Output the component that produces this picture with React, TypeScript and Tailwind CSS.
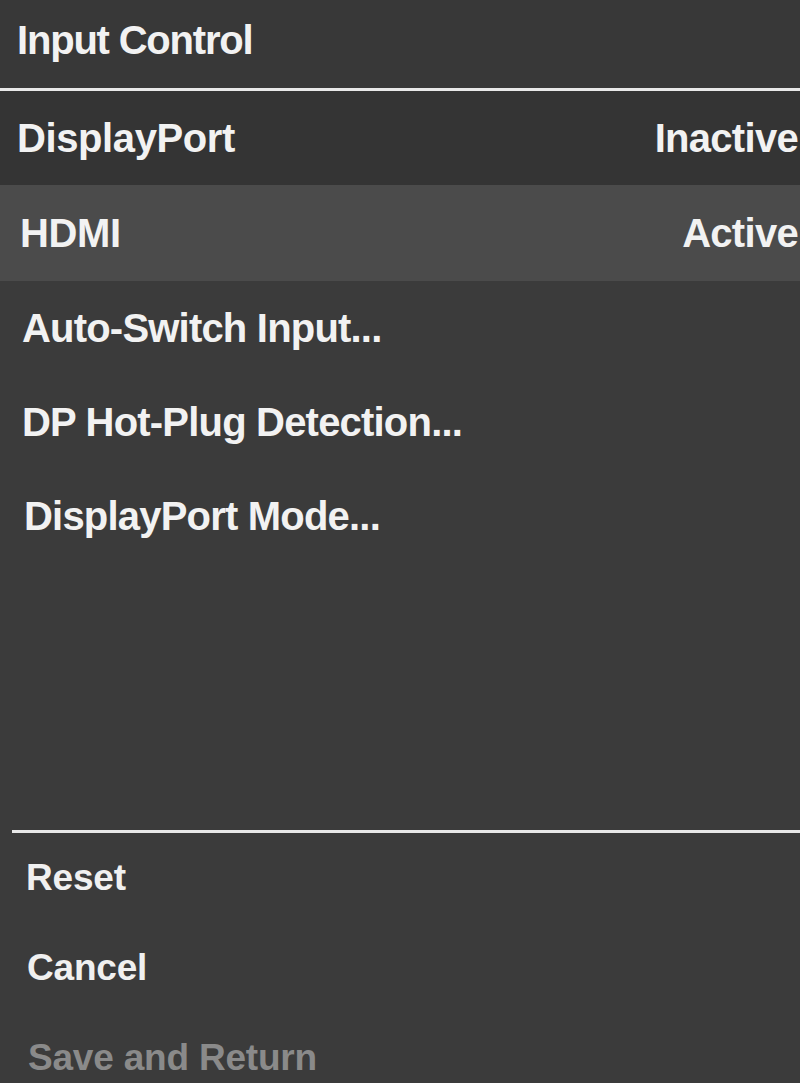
const font = "font-['Liberation_Sans',Arial,sans-serif]"

const inputs = [
  { label: "DisplayPort", status: "Inactive", row: "h-[94px] bg-[#343434] pl-[17px]" },
  { label: "HDMI", status: "Active", row: "h-[96px] bg-[#4b4b4b] pl-[20px]" },
]

const options = [
  { label: "Auto-Switch Input...", row: "pl-[22px]" },
  { label: "DP Hot-Plug Detection...", row: "pl-[22px]" },
  { label: "DisplayPort Mode...", row: "pl-[24px]" },
]

const actions = [
  { label: "Reset", row: "pl-[26px] text-[#f0f0f0]" },
  { label: "Cancel", row: "pl-[27px] text-[#f0f0f0]" },
  { label: "Save and Return", row: "pl-[28px] text-[#8a8a8a]" },
]

export default function App() {
  return (
    <main className={`w-[800px] h-[1083px] overflow-hidden bg-[#3b3b3b] text-[#f2f2f2] ${font}`}>
      <header className="h-[88px] flex items-center pl-[17px] pb-[8px] bg-[#383838]">
        <h1 className="text-[40px] leading-none font-bold tracking-[-1.2px]">Input Control</h1>
      </header>
      <div className="h-[3px] bg-[#e8e8e8]" />

      {inputs.map((item) => (
        <div key={item.label} className={`flex items-center justify-between pr-[2px] ${item.row}`}>
          <span className="text-[40px] leading-none font-bold tracking-[-0.4px]">{item.label}</span>
          <span className="text-[40px] leading-none font-bold tracking-[-0.7px]">{item.status}</span>
        </div>
      ))}

      {options.map((item) => (
        <div key={item.label} className={`h-[94px] flex items-center ${item.row}`}>
          <span className="text-[40px] leading-none font-bold tracking-[-0.8px]">{item.label}</span>
        </div>
      ))}

      <div className="h-[267px]" />
      <div className="ml-[12px] h-[3px] bg-[#e8e8e8]" />

      {actions.map((item) => (
        <div key={item.label} className={`h-[90px] flex items-center pb-[2px] ${item.row}`}>
          <span className="text-[37px] leading-none font-bold tracking-[-0.2px]">{item.label}</span>
        </div>
      ))}
    </main>
  )
}
